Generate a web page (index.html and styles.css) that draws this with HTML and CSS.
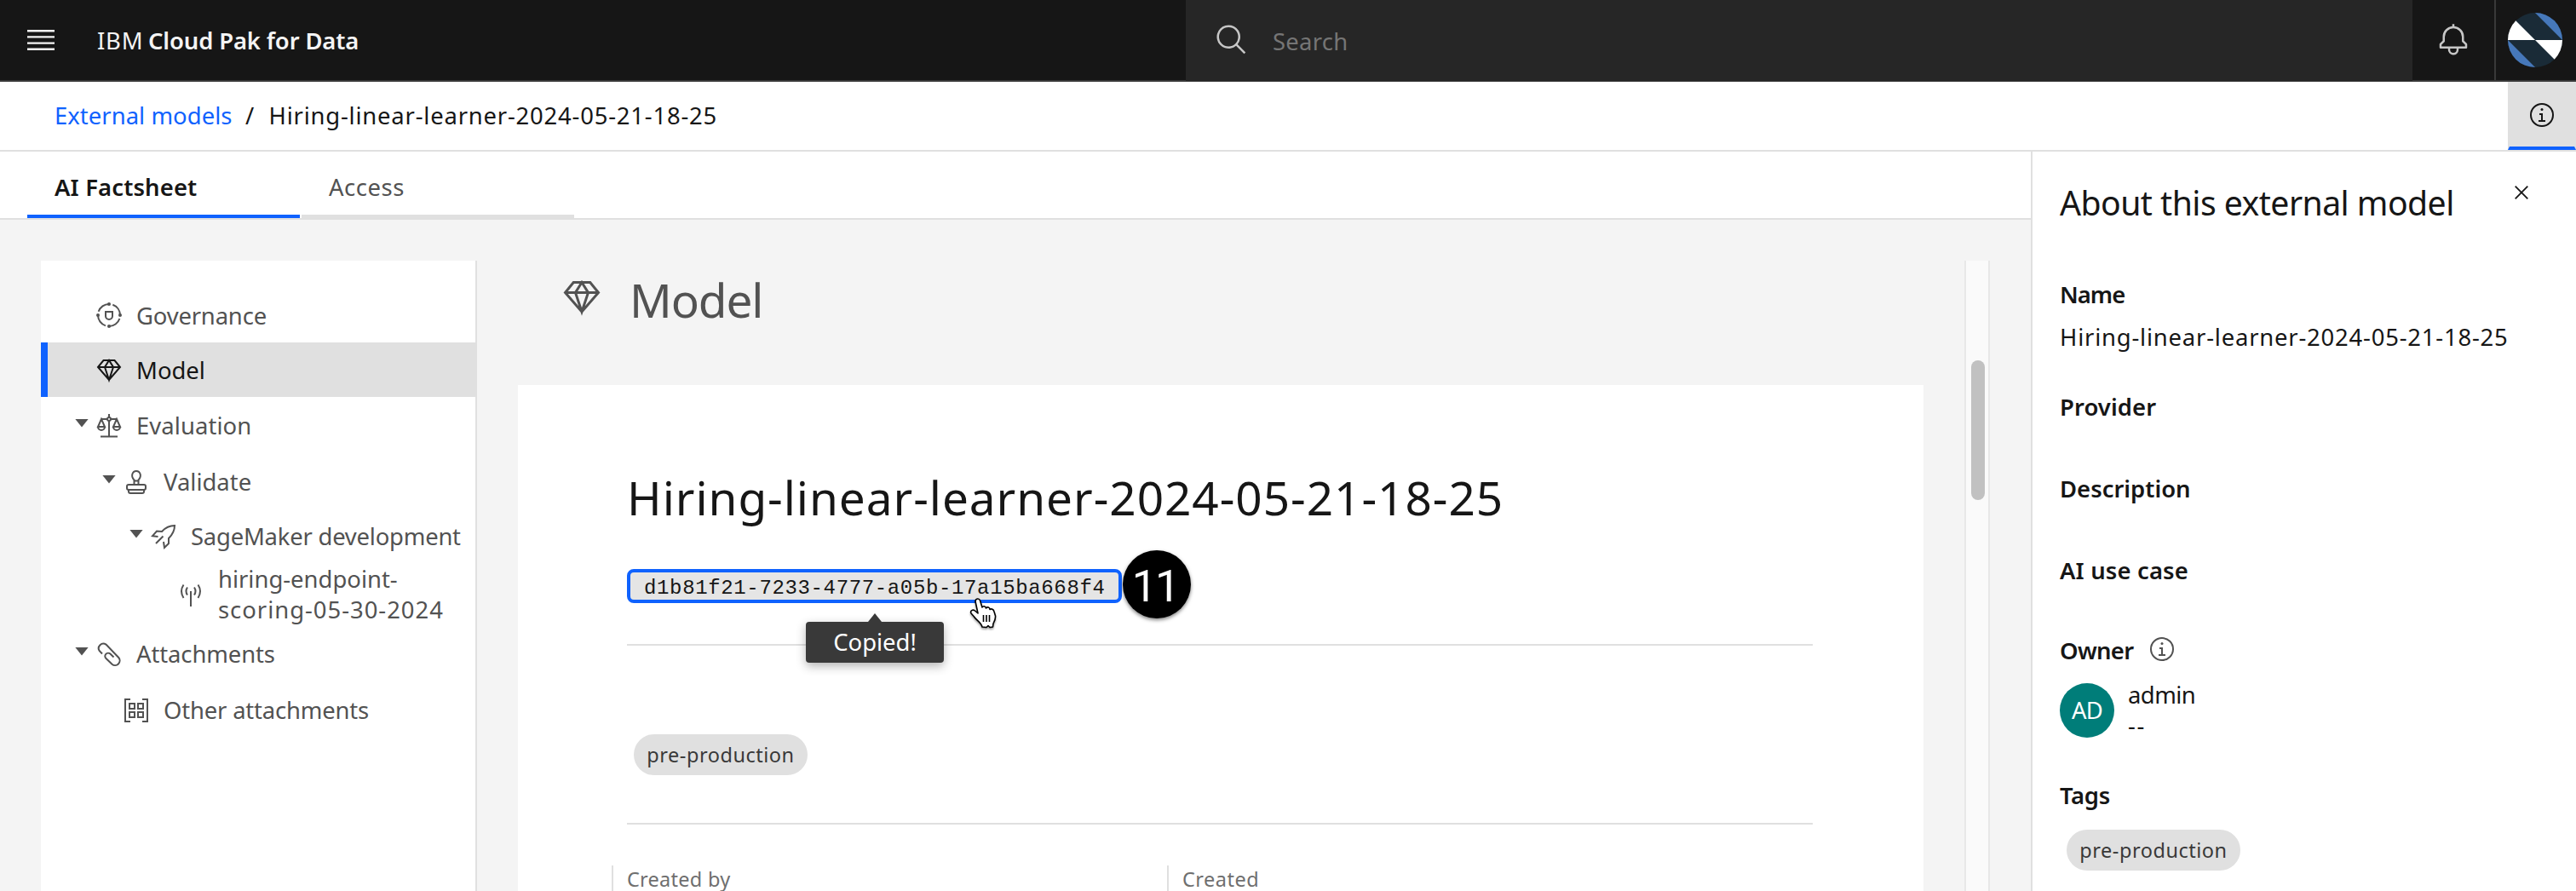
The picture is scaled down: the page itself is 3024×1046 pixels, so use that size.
FILE: index.html
```html
<!DOCTYPE html>
<html lang="en">
<head>
<meta charset="utf-8">
<title>IBM Cloud Pak for Data</title>
<link rel="stylesheet" href="styles.css">
</head>
<body>
<svg class="defs" aria-hidden="true">
  <symbol id="gem" viewBox="0 0 32 32"><path d="M9.5 5h13L29 13 16 28 3 13zM3 13h26M16 5l-5 8 5 15 5-15z"/></symbol>
  <symbol id="info" viewBox="0 0 32 32"><circle cx="16" cy="16" r="13"/><path d="M13 15h3v8M12 23h8"/><circle class="solid" cx="16" cy="9.5" r="1.5"/></symbol>
</svg>

<header class="topbar">
  <svg class="menu-icon" viewBox="0 0 20 20"><path d="M2 14.8h16V16H2zM2 11.2h16v1.2H2zM2 7.6h16v1.2H2zM2 4h16v1.2H2z"/></svg>
  <div class="brand"><span class="brand-ibm">IBM</span><b>Cloud Pak for Data</b></div>
  <div class="search">
    <svg class="search-icon" viewBox="0 0 32 32"><path d="M29 27.586l-7.552-7.552a11.018 11.018 0 1 0-1.414 1.414L27.586 29zM4 13a9 9 0 1 1 9 9 9.01 9.01 0 0 1-9-9z"/></svg>
    <span>Search</span>
  </div>
  <div class="bell">
    <svg viewBox="0 0 32 32"><path d="M28.7071,19.293,26,16.5859V13a10.0136,10.0136,0,0,0-9-9.9492V1H15V3.0508A10.0136,10.0136,0,0,0,6,13v3.5859L3.2929,19.293A1,1,0,0,0,3,20v3a1,1,0,0,0,1,1h7v.7768a5.152,5.152,0,0,0,4.5,5.1987A5.0057,5.0057,0,0,0,21,25V24h7a1,1,0,0,0,1-1V20A1,1,0,0,0,28.7071,19.293ZM19,25a3,3,0,0,1-6,0V24h6Zm8-3H5V20.4141L7.707,17.707A1,1,0,0,0,8,17V13a8,8,0,0,1,16,0v4a1,1,0,0,0,.293.707L27,20.4141Z"/></svg>
  </div>
  <div class="profile">
    <svg viewBox="0 0 64 64">
      <clipPath id="round"><circle cx="32" cy="32" r="32"/></clipPath>
      <g clip-path="url(#round)">
        <path fill="#1a2b37" d="M0 0h64v64H0z"/>
        <path fill="#fff" d="M0 0v32h32zM32 32h32v32z"/>
        <path fill="#4678ba" d="M32 0h32v32zM0 32v32h32z"/>
      </g>
    </svg>
  </div>
</header>

<nav class="crumbs">
  <a class="crumb-link">External models</a>
  <span class="slash">/</span>
  <span class="crumb-current">Hiring-linear-learner-2024-05-21-18-25</span>
  <div class="info-toggle"><svg class="icon"><use href="#info"/></svg></div>
</nav>

<div class="page">
  <main class="main">
    <div class="tabs">
      <div class="tab selected">AI Factsheet</div>
      <div class="tab access">Access</div>
    </div>
    <div class="workspace">
      <aside class="tree">
        <div class="row governance"><i class="slot"></i>
          <svg class="icon" viewBox="0 0 32 32"><circle cx="16" cy="16" r="13" stroke-dasharray="16.4 4.02" stroke-dashoffset="16.4"/><path d="M12 12h8v5a4 4 0 0 1-8 0z"/><g class="solid"><circle cx="16" cy="3" r="2"/><circle cx="29" cy="16" r="2"/><circle cx="16" cy="29" r="2"/><circle cx="3" cy="16" r="2"/></g></svg>
          <span>Governance</span></div>
        <div class="row model active"><i class="slot"></i>
          <svg class="icon"><use href="#gem"/></svg>
          <span>Model</span></div>
        <div class="row tall evaluation"><i class="slot caret"></i>
          <svg class="icon" viewBox="0 0 32 32"><path d="M16 2v4M16 10v18.5M6 28.5h20M7 8h7M18 8h7M7 8L3 17h8zM3 17a4 4 0 0 0 8 0M25 8l-4 9h8zM21 17a4 4 0 0 0 8 0"/><circle cx="16" cy="8" r="2"/></svg>
          <span>Evaluation</span></div>
        <div class="row tall level-2 validate"><i class="slot caret"></i>
          <svg class="icon" viewBox="0 0 32 32"><path d="M13.5 19v-5.500C9 9 11.500 3 16 3s7 6 2.500 10.500V19M13.500 14.500h5M7 25v2q0 2 2 2h14q2 0 2-2v-2"/><rect x="5" y="19" width="22" height="6" rx="2"/></svg>
          <span>Validate</span></div>
        <div class="row short level-3 sagemaker"><i class="slot caret"></i>
          <svg class="icon" viewBox="0 0 32 32"><path d="M9.500 16L3 15.200 8 9.500l6 .5C19 4.500 23 3 29 3c0 6-2 10-7 15v6l-5 5-1-7M7 24l8.500-8.500"/></svg>
          <span>SageMaker development</span></div>
        <div class="row double level-4 endpoint"><i class="slot"></i>
          <svg class="icon" viewBox="0 0 32 32"><path d="M16 11v18M7.500 3.500Q2.500 11 7.500 19M12 6.500Q9 11 12 15.500M24.500 3.500Q29.500 11 24.500 19M20 6.500Q23 11 20 15.500"/></svg>
          <span>hiring-endpoint-<br><span class="digits">scoring-05-30-2024</span></span></div>
        <div class="row tall attachments"><i class="slot caret"></i>
          <svg class="icon" viewBox="0 0 32 32"><path d="M8 15.500l-3.200-3.300A5.500 5.500 0 0 1 12.500 4.600L27.300 20A5.500 5.500 0 0 1 19.500 27.700L12.500 21A3.500 3.500 0 0 1 17.400 15.600L21.500 19.500"/></svg>
          <span>Attachments</span></div>
        <div class="row tall level-2 other"><i class="slot"></i>
          <svg class="icon" viewBox="0 0 32 32"><path d="M9 3H3v26h6M23 3h6v26h-6"/><path d="M8 8h6v6H8zM18 8h6v6h-6zM8 18h6v6H8zM18 18h6v6h-6z"/></svg>
          <span>Other attachments</span></div>
      </aside>

      <section class="content">
        <div class="section-head">
          <svg class="icon-large"><use href="#gem"/></svg>
          <h1>Model</h1>
        </div>
        <article class="card">
          <h2>Hiring-linear-learner-2024-05-21-18-25</h2>
          <div class="id-line">
            <code class="model-id">d1b81f21-7233-4777-a05b-17a15ba668f4</code>
            <div class="step">11</div>
            <div class="tooltip">Copied!</div>
            <svg class="pointer" viewBox="0 0 34 38"><path d="M7 5C7 1.500 11.500 1 12.500 4L15 12C16 10 19 10.500 19.500 13C21 11 24 12 24 14.500C26 13 28.500 14.500 29 17L30.500 22C31 26 29 29 28 31L27.500 35L24 35.500L22 33.500L20 35.500L15 35C14 30 8 27 5.500 23L2 19C.5 16 4 14 6.500 16L10 19z"/><path d="M16.500 21v8M20 21v8M23.500 21v8"/></svg>
          </div>
          <hr>
          <div class="tag card-tag">pre-production</div>
          <hr>
          <div class="fields">
            <div class="field created-by">Created by</div>
            <div class="field created">Created</div>
          </div>
        </article>
      </section>
      <div class="scrollbar"><div class="thumb"></div></div>
    </div>
  </main>

  <aside class="about">
    <div class="about-head">
      <h3>About this external model</h3>
      <svg class="close" viewBox="0 0 16 16"><path d="M.7.7l14.600 14.600M15.300.7L.7 15.300"/></svg>
    </div>
    <h4 class="l-name">Name</h4>
    <p class="name-value">Hiring-linear-learner-2024-05-21-18-25</p>
    <h4 class="l-provider">Provider</h4>
    <h4 class="l-description">Description</h4>
    <h4 class="l-usecase">AI use case</h4>
    <h4 class="l-owner"><span>Owner</span><svg class="icon"><use href="#info"/></svg></h4>
    <div class="owner">
      <div class="initials">AD</div>
      <div class="owner-text"><span class="owner-name">admin</span><br><span class="dashes">--</span></div>
    </div>
    <h4 class="l-tags">Tags</h4>
    <div class="tag about-tag">pre-production</div>
  </aside>
</div>
</body>
</html>
```
FILE: styles.css
```css
* { box-sizing: border-box; }

body {
  margin: 0;
  width: 3024px;
  height: 1046px;
  overflow: hidden;
  display: flex;
  flex-direction: column;
  background: #fff;
  color: #161616;
  font-family: "Noto Sans", sans-serif;
  font-size: 27.44px;
  line-height: 36px;
}

h1, h2, h3, h4, p, hr { margin: 0; }
svg { display: block; flex: none; }
.defs { position: absolute; width: 0; height: 0; }

.icon, .icon-large, .close {
  width: 32px;
  height: 32px;
  fill: none;
  stroke: currentColor;
  stroke-width: 2;
}
.icon-large { width: 48px; height: 48px; }
.solid { fill: currentColor; stroke: none; }

/* Top bar */
.topbar {
  flex: none;
  display: flex;
  align-items: center;
  height: 96px;
  padding-left: 28px;
  background: #161616;
  border-bottom: 2px solid #393939;
  color: #f4f4f4;
}
.menu-icon { width: 40px; height: 40px; fill: #f4f4f4; }
.brand { display: flex; margin-left: 46px; padding-top: 1px; }
.brand-ibm { width: 60px; letter-spacing: .8px; }
.brand b { font-weight: 600; letter-spacing: -.14px; }
.search {
  display: flex;
  align-items: center;
  width: 1440px;
  height: 95px;
  margin: 0 0 -1px auto;
  padding-left: 34px;
  gap: 28px;
  background: #262626;
  color: #757575;
}
.search span { letter-spacing: .28px; padding-top: 2px; }
.search-icon { width: 40px; height: 40px; fill: #c6c6c6; margin-bottom: 2px; }
.bell {
  display: flex;
  justify-content: center;
  width: 96px;
}
.bell svg { width: 40px; height: 40px; fill: #c6c6c6; }
.profile {
  display: flex;
  align-items: center;
  width: 96px;
  height: 94px;
  padding-left: 14px;
  border-left: 2px solid #393939;
}
.profile svg { width: 64px; height: 64px; }

/* Breadcrumb */
.crumbs {
  flex: none;
  display: flex;
  align-items: center;
  height: 82px;
  padding-left: 64px;
  border-bottom: 2px solid #e0e0e0;
}
.crumb-link { width: 224px; color: #0f62fe; letter-spacing: .04px; }
.slash { width: 27.500px; }
.crumb-current { letter-spacing: .8px; }
.info-toggle {
  display: flex;
  justify-content: center;
  align-items: center;
  width: 80px;
  height: 80px;
  margin-left: auto;
  padding-top: 2px;
  background: #e0e0e0;
  border: solid #e0e0e0;
  border-width: 0 2px 4px;
  border-bottom-color: #0f62fe;
}

.page { flex: 1; display: flex; min-height: 0; }
.main { width: 2384px; display: flex; flex-direction: column; }

/* Tabs */
.tabs {
  flex: none;
  display: flex;
  gap: 2px;
  height: 80px;
  padding-left: 32px;
  border-bottom: 2px solid #e0e0e0;
}
.tab {
  display: flex;
  align-items: center;
  width: 320px;
  padding: 10px 0 0 32px;
  border-bottom: 4px solid #e0e0e0;
  color: #525252;
}
.tab.selected {
  border-color: #0f62fe;
  color: #161616;
  font-weight: 600;
  letter-spacing: .14px;
}
.tab.access { letter-spacing: .54px; }

.workspace {
  flex: 1;
  display: flex;
  min-height: 0;
  padding: 48px 48px 0;
  background: #f4f4f4;
}

/* Navigation tree */
.tree {
  width: 512px;
  padding-top: 32px;
  background: #fff;
  border-right: 2px solid #e0e0e0;
  color: #525252;
}
.row {
  display: flex;
  align-items: center;
  height: 64px;
  padding-left: 40px;
}
.row .icon { margin-right: 16px; }
.row > span { padding-top: 2px; }
.row.tall { height: 66px; }
.row.short { height: 62px; }
.row.double { height: 74px; }
.tall .icon, .short .icon { margin-top: 2px; }
.double .icon { margin-top: 4px; }
.row.active {
  margin-right: -2px;
  padding-left: 32px;
  background: #e0e0e0;
  border-left: 8px solid #0f62fe;
  color: #161616;
}
.level-2 { padding-left: 72px; }
.level-3 { padding-left: 104px; }
.level-4 { padding-left: 136px; }
.slot { width: 24px; flex: none; }
.caret::before {
  content: "";
  display: block;
  width: 16px;
  height: 10px;
  margin-bottom: 5px;
  background: #525252;
  clip-path: polygon(0 0, 100% 0, 50% 100%);
}
.governance { letter-spacing: -.18px; }
.evaluation { letter-spacing: .07px; }
.sagemaker { letter-spacing: -.22px; white-space: nowrap; }
.digits { letter-spacing: .98px; }
.attachments { letter-spacing: -.1px; }
.other { letter-spacing: -.18px; }

/* Factsheet */
.content { width: 1746px; padding: 0 48px; }
.section-head {
  display: flex;
  align-items: center;
  height: 146px;
  padding: 0 0 55px 51px;
  gap: 32px;
  color: #525252;
}
.section-head .icon-large { margin-bottom: 7px; }
h1 {
  padding-top: 1px;
  font-size: 54.900px;
  line-height: 72px;
  font-weight: 400;
  letter-spacing: -1.100px;
}
.card {
  height: 600px;
  padding: 96px 130px 0 128px;
  background: #fff;
}
h2 {
  font-size: 54.900px;
  line-height: 72px;
  font-weight: 400;
  letter-spacing: .960px;
  white-space: nowrap;
}
.id-line { position: relative; display: flex; margin: 48px 0; }
.model-id {
  width: 581px;
  height: 40px;
  padding: 5px 15px 0 16px;
  background: #e5e5e5;
  border: 4px solid #0f62fe;
  border-radius: 8px;
  font: 24px/27px "Liberation Mono", monospace;
  letter-spacing: .64px;
  white-space: nowrap;
}
.step {
  position: absolute;
  left: 582px;
  top: -22px;
  width: 80px;
  height: 80px;
  border-radius: 50%;
  background: #000;
  box-shadow: 0 2px 4px rgba(0, 0, 0, .5);
  color: #fff;
  font: 400 52px/85px Roboto, sans-serif;
  letter-spacing: -2px;
  text-indent: -4px;
  text-align: center;
}
.tooltip {
  position: absolute;
  left: 210px;
  top: 62px;
  width: 162px;
  height: 48px;
  border-radius: 4px;
  background: #393939;
  box-shadow: 0 4px 12px rgba(0, 0, 0, .3);
  color: #fff;
  line-height: 48px;
  text-align: center;
}
.tooltip::before {
  content: "";
  position: absolute;
  left: 73px;
  top: -10px;
  width: 16px;
  height: 10px;
  background: #393939;
  clip-path: polygon(50% 0, 100% 100%, 0 100%);
}
.pointer {
  position: absolute;
  left: 402px;
  top: 33px;
  width: 34px;
  height: 38px;
  fill: #fff;
  stroke: #000;
  stroke-width: 1.600;
  stroke-linejoin: round;
  filter: drop-shadow(0 2px 1px rgba(0, 0, 0, .35));
}
hr { height: 2px; border: 0; background: #e0e0e0; }
.tag {
  width: 204px;
  height: 48px;
  border-radius: 24px;
  background: #e0e0e0;
  color: #393939;
  font-size: 23.500px;
  line-height: 48px;
  letter-spacing: .53px;
  text-align: center;
}
.card-tag { margin: 104px 0 56px 8px; }
.fields {
  display: flex;
  margin: 48px 0 0 -18px;
  color: #6f6f6f;
  font-size: 23.500px;
  line-height: 32px;
}
.field { width: 652px; height: 60px; padding-left: 16px; border-left: 2px solid #e0e0e0; }
.created-by { letter-spacing: .26px; }
.created { letter-spacing: .48px; }

.scrollbar {
  flex: none;
  width: 30px;
  padding: 117px 4px 0 6px;
  background: #fafafa;
  border: solid #e8e8e8;
  border-width: 0 2px;
}
.thumb { width: 16px; height: 164px; border-radius: 8px; background: #c1c1c1; }

/* About panel */
.about {
  width: 640px;
  padding: 36px 0 0 32px;
  border-left: 2px solid #e0e0e0;
}
.about-head { display: flex; }
h3 {
  width: 534px;
  font-size: 39.200px;
  line-height: 48px;
  font-weight: 400;
  letter-spacing: -.55px;
}
.close { width: 16px; height: 16px; margin-top: 4px; stroke-width: 1.800; }
h4 { font-size: inherit; font-weight: 600; }
.l-name { margin-top: 66px; letter-spacing: -.97px; }
.name-value { margin-top: 14px; letter-spacing: .8px; }
.l-provider { margin-top: 46px; letter-spacing: .08px; }
.l-description { margin-top: 60px; }
.l-usecase { margin-top: 60px; letter-spacing: .15px; }
.l-owner { display: flex; margin-top: 58px; letter-spacing: -.67px; }
.l-owner span { width: 104px; }
.l-owner .icon { color: #525252; }
.owner { display: flex; align-items: center; height: 72px; margin-top: 15px; }
.owner-text { padding-top: 2px; }
.initials {
  width: 64px;
  height: 64px;
  margin: 2px 16px 0 0;
  border-radius: 50%;
  background: #007d79;
  color: #fff;
  line-height: 64px;
  letter-spacing: -.7px;
  text-align: center;
}
.owner-name { letter-spacing: -.55px; }
.dashes { letter-spacing: 1.600px; }
.l-tags { margin-top: 47px; letter-spacing: -.3px; }
.about-tag { margin: 22px 0 0 8px; }
```
